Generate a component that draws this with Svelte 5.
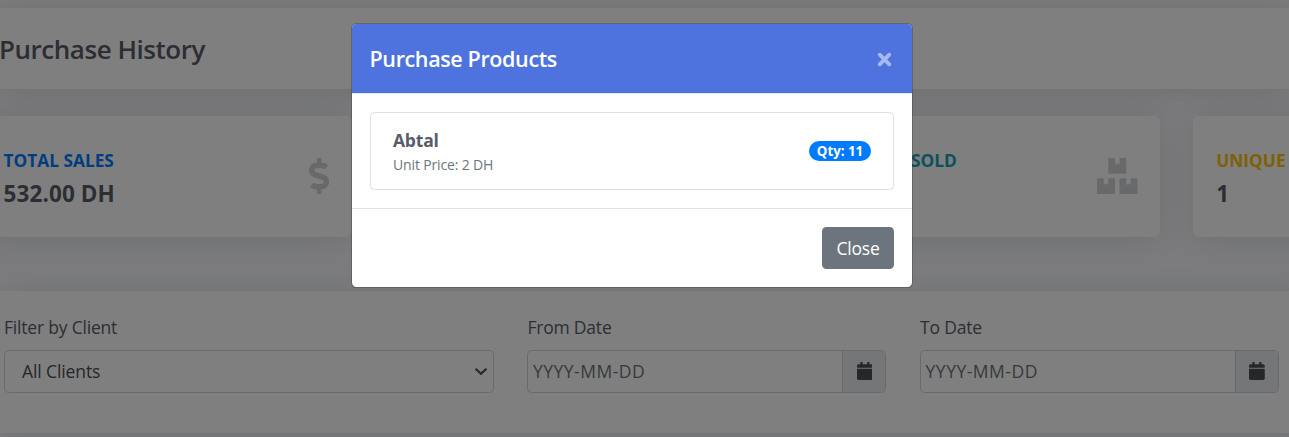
<script>
  const dollar = {
    box: '0 0 288 512',
    width: 20.25,
    d: 'M209.2 233.4l-108-31.6C88.7 198.2 80 186.5 80 173.5c0-16.3 13.2-29.5 29.5-29.5h66.3c12.2 0 24.2 3.7 34.2 10.5 6.1 4.1 14.3 3.1 19.5-2l34.8-34c7.1-6.9 6.1-18.4-1.8-24.5C238 74.8 207.4 64.1 176 64V16c0-8.8-7.2-16-16-16h-32c-8.8 0-16 7.2-16 16v48h-2.5C45.8 64-5.4 118.7.5 183.6c4.2 46.1 39.4 83.6 83.8 96.6l102.5 30c12.5 3.7 21.2 15.3 21.2 28.3 0 16.3-13.2 29.5-29.5 29.5h-66.3C100 368 88 364.3 78 357.5c-6.1-4.1-14.3-3.1-19.5 2l-34.8 34c-7.1 6.9-6.1 18.4 1.8 24.5 24.5 19.2 55.1 29.9 86.5 30v48c0 8.8 7.2 16 16 16h32c8.8 0 16-7.2 16-16v-48.2c46.6-.9 90.3-28.6 105.7-72.7 21.5-61.6-14.6-124.8-72.5-141.7z'
  };
  const boxes = {
    box: '0 0 576 512',
    width: 40.5,
    d: 'M560 288h-80v96l-32-21.3-32 21.3v-96h-80c-8.8 0-16 7.2-16 16v192c0 8.8 7.2 16 16 16h224c8.8 0 16-7.2 16-16V304c0-8.8-7.2-16-16-16zm-384-64h224c8.8 0 16-7.2 16-16V16c0-8.8-7.2-16-16-16h-80v96l-32-21.3L256 96V0h-80c-8.8 0-16 7.2-16 16v192c0 8.8 7.2 16 16 16zm64 64h-80v96l-32-21.3L96 384v-96H16c-8.8 0-16 7.2-16 16v192c0 8.8 7.2 16 16 16h224c8.8 0 16-7.2 16-16V304c0-8.8-7.2-16-16-16z'
  };
  const cards = [
    { label: 'TOTAL SALES', value: '532.00 DH', tone: 'blue', icon: dollar },
    { label: '', value: '', tone: '', icon: null },
    { label: 'SOLD', value: '', tone: 'teal', icon: boxes },
    { label: 'UNIQUE', value: '1', tone: 'yellow', icon: null }
  ];
  const dates = ['From Date', 'To Date'];
</script>

<div class="page">
  <header class="heading"><h1>Purchase History</h1></header>

  <section class="stats">
    {#each cards as card}
      <div class="card stat">
        <div>
          <div class="label {card.tone}">{card.label}</div>
          <div class="value">{card.value}</div>
        </div>
        {#if card.icon}
          <svg width={card.icon.width} height="36" viewBox={card.icon.box}><path fill="#d1d3d7" d={card.icon.d} /></svg>
        {/if}
      </div>
    {/each}
  </section>

  <section class="filters">
    <div class="field client">
      <span class="name">Filter by Client</span>
      <div class="control select">
        <span>All Clients</span>
        <svg width="14" height="10" viewBox="0 0 14 10"><path d="M1.6 1.8 7 6.8l5.4-5" fill="none" stroke="#495057" stroke-width="2.2" /></svg>
      </div>
    </div>
    {#each dates as name}
      <div class="field">
        <span class="name">{name}</span>
        <div class="control date">
          <span class="hint">YYYY-MM-DD</span>
          <span class="addon">
            <svg width="15.75" height="18" viewBox="0 0 448 512"><path fill="#495057" d="M12 192h424c6.6 0 12 5.4 12 12v260c0 26.5-21.5 48-48 48H48c-26.5 0-48-21.5-48-48V204c0-6.6 5.4-12 12-12zm436-44v-36c0-26.5-21.5-48-48-48h-48V12c0-6.6-5.4-12-12-12h-40c-6.6 0-12 5.4-12 12v52H160V12c0-6.6-5.4-12-12-12h-40c-6.6 0-12 5.4-12 12v52H48C21.5 64 0 85.5 0 112v36c0 6.6 5.4 12 12 12h424c6.6 0 12-5.4 12-12z" /></svg>
          </span>
        </div>
      </div>
    {/each}
  </section>
</div>

<div class="backdrop">
  <div class="modal">
    <div class="modal-header">
      <h2>Purchase Products</h2>
      <svg class="dismiss" width="15" height="15" viewBox="0 0 15 15"><path d="M2.7 2.7l9.6 9.6M12.3 2.7l-9.6 9.6" stroke="#fff" stroke-width="3.8" stroke-linecap="round" /></svg>
    </div>
    <div class="modal-body">
      <div class="item">
        <div>
          <div class="product">Abtal</div>
          <div class="price">Unit Price: 2 DH</div>
        </div>
        <span class="badge">Qty: 11</span>
      </div>
    </div>
    <div class="modal-footer"><button>Close</button></div>
  </div>
</div>

<style>
  :global(body) {
    overflow: hidden;
    font-family: 'Open Sans', 'Noto Sans', sans-serif;
  }
  * { box-sizing: border-box; }
  svg { display: block; flex: none; }
  .page {
    height: 437px;
    padding-top: 8px;
    overflow: hidden;
    background: #f8f9fc;
    color: #5a5c69;
    white-space: nowrap;
  }
  .heading, .card, .filters {
    background: #fff;
    box-shadow: 0 2.7px 31.5px rgba(58, 59, 69, 0.15);
  }
  .heading {
    height: 81px;
    display: flex;
    align-items: center;
  }
  h1 {
    margin: 0 0 0 -1px;
    font-size: 26px;
    line-height: 32px;
    font-weight: 600;
    letter-spacing: -0.46px;
  }
  .stats {
    display: grid;
    grid-template-columns: repeat(4, 371px);
    gap: 33.25px;
    margin: 27px 0 54px -19.5px;
  }
  .card {
    height: 121px;
    padding: 0 22.5px 0 23px;
    border-radius: 6px;
  }
  .stat {
    display: flex;
    justify-content: space-between;
    align-items: center;
  }
  .stat svg { margin-top: -2px; }
  .label {
    height: 27px;
    font-size: 17.3px;
    line-height: 27px;
    font-weight: 700;
    letter-spacing: 0;
  }
  .blue { color: #007bff; }
  .teal { padding-left: 99px; color: #17a2b8; }
  .yellow { color: #ffc107; }
  .value {
    height: 27px;
    margin-top: 5px;
    font-size: 22.5px;
    line-height: 29px;
    font-weight: 700;
    letter-spacing: 0.1px;
  }
  .filters {
    display: flex;
    gap: 33.5px;
    height: 142px;
    margin-right: -20px;
    padding: 23px 0 0 4px;
  }
  .field { width: 359px; flex: none; }
  .client { width: 489.9px; }
  .field:last-child { margin-left: 0.2px; }
  .name {
    display: block;
    height: 36px;
    font-size: 17.5px;
    line-height: 26px;
    letter-spacing: -0.2px;
  }
  .control {
    display: flex;
    justify-content: space-between;
    height: 43px;
    border: 1px solid #ced4da;
    border-radius: 4.5px;
    color: #495057;
    font-size: 17.5px;
    line-height: 41px;
    letter-spacing: -0.1px;
    overflow: hidden;
  }
  .select { align-items: center; padding: 0 5px 0 17px; }
  .hint {
    padding-left: 4.5px;
    color: #6c757d;
    letter-spacing: 0.5px;
  }
  .addon {
    display: flex;
    align-items: center;
    justify-content: center;
    width: 43px;
    border-left: 1px solid #ced4da;
    background: #e9ecef;
  }
  .addon svg { margin-top: -2px; }
  .backdrop {
    position: absolute;
    inset: 0;
    height: 437px;
    background: rgba(0, 0, 0, 0.5);
  }
  .modal {
    width: 562px;
    height: 265px;
    margin: 23px 0 0 351px;
    border: 1px solid rgba(0, 0, 0, 0.2);
    border-radius: 5.4px;
    background: #fff;
    background-clip: padding-box;
  }
  .modal-header {
    display: flex;
    justify-content: space-between;
    align-items: center;
    height: 70px;
    padding: 0 20px 0 17.5px;
    border-bottom: 1px solid #e3e6f0;
    border-radius: 4.4px 4.4px 0 0;
    background: #4e73df;
    background-clip: padding-box;
    color: #fff;
  }
  h2 {
    margin: 1px 0 0;
    font-size: 21.5px;
    line-height: 34px;
    font-weight: 600;
    letter-spacing: -0.37px;
  }
  .dismiss { opacity: 0.5; margin-top: 1px; }
  .modal-body { padding: 18px; }
  .item {
    display: flex;
    justify-content: space-between;
    align-items: center;
    height: 78px;
    padding: 0 22px;
    border: 1px solid #dddfe2;
    border-radius: 4.5px;
  }
  .product {
    font-size: 17.5px;
    line-height: 26px;
    font-weight: 700;
    letter-spacing: -0.2px;
    color: #5a5c69;
  }
  .price {
    font-size: 14px;
    line-height: 23px;
    letter-spacing: -0.15px;
    color: #6c757d;
  }
  .badge {
    width: 62px;
    height: 20px;
    border-radius: 10px;
    background: #007bff;
    color: #fff;
    font-size: 13.3px;
    line-height: 20px;
    font-weight: 700;
    text-align: center;
    letter-spacing: 0;
  }
  .modal-footer {
    display: flex;
    justify-content: flex-end;
    padding: 18px;
    border-top: 1px solid #dee2e6;
  }
  button {
    width: 72px;
    height: 42px;
    padding: 0;
    border: 0;
    border-radius: 4.5px;
    background: #6c757d;
    color: #fff;
    font: 17.5px/42px 'Open Sans', 'Noto Sans', sans-serif;
    letter-spacing: -0.2px;
  }
</style>
